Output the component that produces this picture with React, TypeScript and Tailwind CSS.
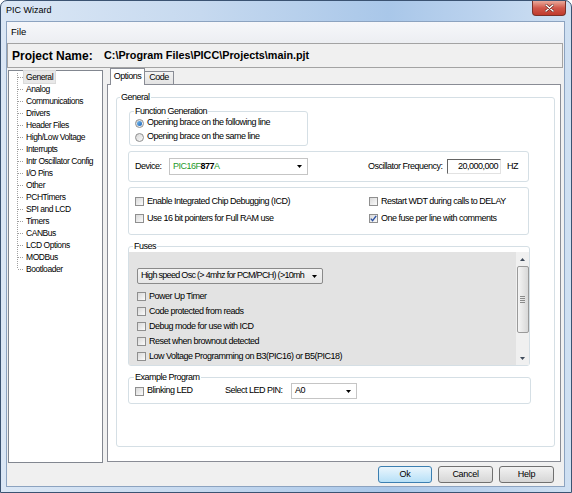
import React from "react";

const Check = ({ checked = false }: { checked?: boolean }) => (
  <span className="inline-flex w-[9px] h-[9px] shrink-0 border border-[#8f8f8f] bg-linear-to-br from-[#d9d9d9] to-[#fbfbfb] items-center justify-center">
    {checked && (
      <svg width="7" height="7" viewBox="0 0 7 7">
        <path d="M0.8 3.6 L2.6 5.6 L6.2 0.9" fill="none" stroke="#2b51a3" strokeWidth="1.4" />
      </svg>
    )}
  </span>
);

const Radio = ({ on = false }: { on?: boolean }) => (
  <span className="inline-flex w-[9px] h-[9px] shrink-0 rounded-full border border-[#8f8f8f] bg-linear-to-br from-[#d6d6d6] to-[#fbfbfb] items-center justify-center">
    {on && <span className="w-[5px] h-[5px] rounded-full bg-linear-to-br from-[#7cc0f0] to-[#1560b8]" />}
  </span>
);

const Arrow = () => (
  <svg width="5" height="3" viewBox="0 0 5 3" className="shrink-0">
    <path d="M0 0 L5 0 L2.5 3 Z" fill="#000" />
  </svg>
);

const treeItems = [
  "General",
  "Analog",
  "Communications",
  "Drivers",
  "Header Files",
  "High/Low Voltage",
  "Interrupts",
  "Intr Oscillator Config",
  "I/O Pins",
  "Other",
  "PCHTimers",
  "SPI and LCD",
  "Timers",
  "CANBus",
  "LCD Options",
  "MODBus",
  "Bootloader",
];

const fuses = [
  "Power Up Timer",
  "Code protected from reads",
  "Debug mode for use with ICD",
  "Reset when brownout detected",
  "Low Voltage Programming on B3(PIC16) or B5(PIC18)",
];

export default function App() {
  return (
    <div className="w-[572px] h-[493px] overflow-hidden bg-white">
      <div className="w-[572px] h-[493px] flex flex-col rounded-t-[7px] border border-[#3b5372] bg-[linear-gradient(90deg,#dbe7f5_0%,#c6d9ef_35%,#a9c7e9_68%,#bcd3ee_85%,#cfe0f2_100%)] font-['Liberation_Sans',Arial,sans-serif] text-black">
        {/* title bar */}
        <div className="h-[21px] shrink-0 flex items-start justify-between pl-[5px] pr-[5px]">
          <span className="text-[9px] leading-[19px]">PIC Wizard</span>
          <div className="w-[34px] h-[15px] rounded-b-[4px] border border-t-0 border-[#7a3128] bg-linear-to-b from-[#e9a99b] via-[#d0574a] to-[#c03a2c] flex items-center justify-center">
            <svg width="9" height="8" viewBox="0 0 9 8">
              <path d="M1 1 L8 7 M8 1 L1 7" stroke="#5c1e17" strokeWidth="2.6" strokeLinecap="round" />
              <path d="M1 1 L8 7 M8 1 L1 7" stroke="#ffffff" strokeWidth="1.5" strokeLinecap="round" />
            </svg>
          </div>
        </div>

        {/* client */}
        <div className="flex-1 ml-[6px] mr-[7px] mb-[6px] bg-[#f0f0f0] flex flex-col outline outline-[#8ca3c0]">
          {/* menu */}
          <div className="h-[21px] shrink-0 flex items-center pl-[4px] text-[9.5px] bg-linear-to-b from-[#f6f7fa] to-[#eceef2]">
            File
          </div>
          {/* project */}
          <div className="h-[25px] shrink-0 mr-[1px] border border-[#a3a3a3] flex items-center pl-[4px] font-bold">
            <span className="w-[92px] text-[12px]">Project Name:</span>
            <span className="text-[10.8px]">C:\Program Files\PICC\Projects\main.pjt</span>
          </div>

          {/* main */}
          <div className="h-[395px] shrink-0 flex">
            {/* tree */}
            <div className="mt-[2px] ml-[1px] w-[95px] h-[393px] bg-white border border-[#828790] flex flex-col">
              {treeItems.map((t, i) => (
                <div key={t} className="h-[12px] flex items-center">
                  <svg width="15" height="12" viewBox="0 0 15 12" className="shrink-0">
                    <path
                      d={`M8.5 ${i === 0 ? 2 : 0} L8.5 ${i === treeItems.length - 1 ? 6 : 12} M9 6.5 L15 6.5`}
                      stroke="#a0a0a0"
                      strokeWidth="1"
                      strokeDasharray="1 1"
                      fill="none"
                    />
                  </svg>
                  <span
                    className={`text-[8.5px] tracking-[-0.45px] leading-[12px] px-[2px] whitespace-nowrap ${
                      i === 0 ? "bg-[#e8e8e8] outline outline-[#dadada]" : ""
                    }`}
                  >
                    {t}
                  </span>
                </div>
              ))}
            </div>

            {/* tabs */}
            <div className="ml-[4px] w-[454px] flex flex-col text-[9px] tracking-[-0.5px]">
              <div className="h-[16px] shrink-0 flex items-end pl-[3px] relative z-10">
                <div className="w-[35px] h-[17px] mb-[-1px] bg-white border border-b-0 border-[#898c95] flex items-start justify-center pt-[2px] leading-[10px]">
                  Options
                </div>
                <div className="w-[29px] h-[13px] bg-linear-to-b from-[#f3f3f3] to-[#e3e3e3] border border-l-0 border-b-0 border-[#898c95] flex items-center justify-center">
                  Code
                </div>
              </div>
              <div className="h-[378px] border border-[#898c95] bg-white">
                <fieldset className="mt-[7px] ml-[8px] w-[439px] h-[355px] border border-[#d5dfe5] rounded-[3px]">
                  <legend className="ml-[3px] px-[1px] leading-[10px]">General</legend>

                  {/* function generation */}
                  <fieldset className="mt-[4px] ml-[12px] w-[179px] border border-[#d5dfe5] rounded-[3px] pb-[1px]">
                    <legend className="ml-[4px] px-[1px] leading-[10px]">Function Generation</legend>
                    <div className="h-[14px] flex items-center pl-[5px] gap-[3px]">
                      <Radio on />
                      <span>Opening brace on the following line</span>
                    </div>
                    <div className="h-[14px] flex items-center pl-[5px] gap-[3px]">
                      <Radio />
                      <span>Opening brace on the same line</span>
                    </div>
                  </fieldset>

                  {/* device */}
                  <div className="mt-[5px] ml-[11px] w-[401px] h-[31px] border border-[#d5dfe5] rounded-[3px] flex items-center pl-[6px]">
                    <span className="w-[34px]">Device:</span>
                    <div className="w-[139px] h-[17px] border border-[#c5c5c5] bg-white flex items-center justify-between pl-[3px] pr-[5px]">
                      <span className="text-[#1f9a2a]">
                        PIC16F<span className="font-bold text-black">877</span>A
                      </span>
                      <Arrow />
                    </div>
                    <span className="ml-[60px] w-[79px] whitespace-nowrap">Oscillator Frequency:</span>
                    <div className="w-[54px] h-[15px] bg-white border-t border-l border-[#646464] border-r border-b border-r-[#e2e2e2] border-b-[#e2e2e2] flex items-center justify-end pr-[2px]">
                      20,000,000
                    </div>
                    <span className="ml-[6px]">HZ</span>
                  </div>

                  {/* options */}
                  <div className="mt-[5px] ml-[11px] w-[401px] h-[48px] border border-[#d5dfe5] rounded-[3px] pt-[5px]">
                    <div className="h-[17px] flex items-center">
                      <div className="w-[240px] pl-[6px] flex items-center gap-[3px]">
                        <Check />
                        <span>Enable Integrated Chip Debugging (ICD)</span>
                      </div>
                      <div className="flex items-center gap-[3px]">
                        <Check />
                        <span>Restart WDT during calls to DELAY</span>
                      </div>
                    </div>
                    <div className="h-[17px] flex items-center">
                      <div className="w-[240px] pl-[6px] flex items-center gap-[3px]">
                        <Check />
                        <span>Use 16 bit pointers for Full RAM use</span>
                      </div>
                      <div className="flex items-center gap-[3px]">
                        <Check checked />
                        <span>One fuse per line with comments</span>
                      </div>
                    </div>
                  </div>

                  {/* fuses */}
                  <fieldset className="mt-[6px] ml-[11px] w-[402px] border border-[#d5dfe5] rounded-[3px]">
                    <legend className="ml-[4px] px-[1px] leading-[10px]">Fuses</legend>
                    <div className="mt-[1px] h-[113px] flex">
                      <div className="flex-1 bg-[#e3e3e3] pt-[16px] pl-[8px]">
                        <div className="w-[186px] h-[16px] rounded-[2px] border border-[#8a8a8a] bg-linear-to-b from-[#f4f4f4] to-[#e6e6e6] flex items-center justify-between pl-[3px] pr-[5px]">
                          <span className="whitespace-nowrap tracking-[-0.7px]">High speed Osc (&gt; 4mhz for PCM/PCH) (&gt;10mh</span>
                          <Arrow />
                        </div>
                        <div className="mt-[5px]">
                          {fuses.map((f) => (
                            <div key={f} className="h-[15px] flex items-center gap-[3px]">
                              <Check />
                              <span className="whitespace-nowrap">{f}</span>
                            </div>
                          ))}
                        </div>
                      </div>
                      {/* scrollbar */}
                      <div className="w-[13px] bg-[#f0f0f0] flex flex-col items-center">
                        <div className="h-[14px] flex items-center justify-center">
                          <svg width="5" height="3" viewBox="0 0 5 3">
                            <path d="M0 3 L5 3 L2.5 0 Z" fill="#3f4a5a" />
                          </svg>
                        </div>
                        <div className="w-[12px] h-[67px] rounded-[2px] border border-[#9a9a9a] bg-linear-to-r from-[#f5f5f5] to-[#d8d8d8] flex flex-col items-center justify-center gap-[1px]">
                          <span className="w-[5px] h-px bg-[#8a8a8a]" />
                          <span className="w-[5px] h-px bg-[#8a8a8a]" />
                          <span className="w-[5px] h-px bg-[#8a8a8a]" />
                          <span className="w-[5px] h-px bg-[#8a8a8a]" />
                        </div>
                        <div className="flex-1" />
                        <div className="h-[14px] flex items-center justify-center">
                          <svg width="5" height="3" viewBox="0 0 5 3">
                            <path d="M0 0 L5 0 L2.5 3 Z" fill="#3f4a5a" />
                          </svg>
                        </div>
                      </div>
                    </div>
                  </fieldset>

                  {/* example program */}
                  <fieldset className="mt-[6px] ml-[11px] w-[403px] border border-[#d5dfe5] rounded-[3px] pb-[3px]">
                    <legend className="ml-[5px] px-[1px] leading-[10px]">Example Program</legend>
                    <div className="h-[18px] flex items-center">
                      <div className="w-[96px] pl-[6px] flex items-center gap-[3px]">
                        <Check />
                        <span>Blinking LED</span>
                      </div>
                      <span className="w-[66px] whitespace-nowrap">Select LED PIN:</span>
                      <div className="w-[66px] h-[16px] border border-[#c5c5c5] bg-white flex items-center justify-between pl-[3px] pr-[5px]">
                        <span>A0</span>
                        <Arrow />
                      </div>
                    </div>
                  </fieldset>
                </fieldset>
              </div>
            </div>
          </div>

          {/* bottom buttons */}
          <div className="h-[23px] shrink-0 flex items-center justify-end pr-[10px] text-[9px] tracking-[-0.3px]">
            <div className="w-[54px] h-[17px] rounded-[3px] border border-[#3c7fb1] bg-linear-to-b from-[#eaf6fd] to-[#b7e0f7] flex items-center justify-center">
              Ok
            </div>
            <div className="ml-[6px] w-[55px] h-[17px] rounded-[3px] border border-[#707070] bg-linear-to-b from-[#f2f2f2] to-[#d6d6d6] flex items-center justify-center">
              Cancel
            </div>
            <div className="ml-[6px] w-[55px] h-[17px] rounded-[3px] border border-[#707070] bg-linear-to-b from-[#f2f2f2] to-[#d6d6d6] flex items-center justify-center">
              Help
            </div>
          </div>
        </div>
      </div>
    </div>
  );
}
